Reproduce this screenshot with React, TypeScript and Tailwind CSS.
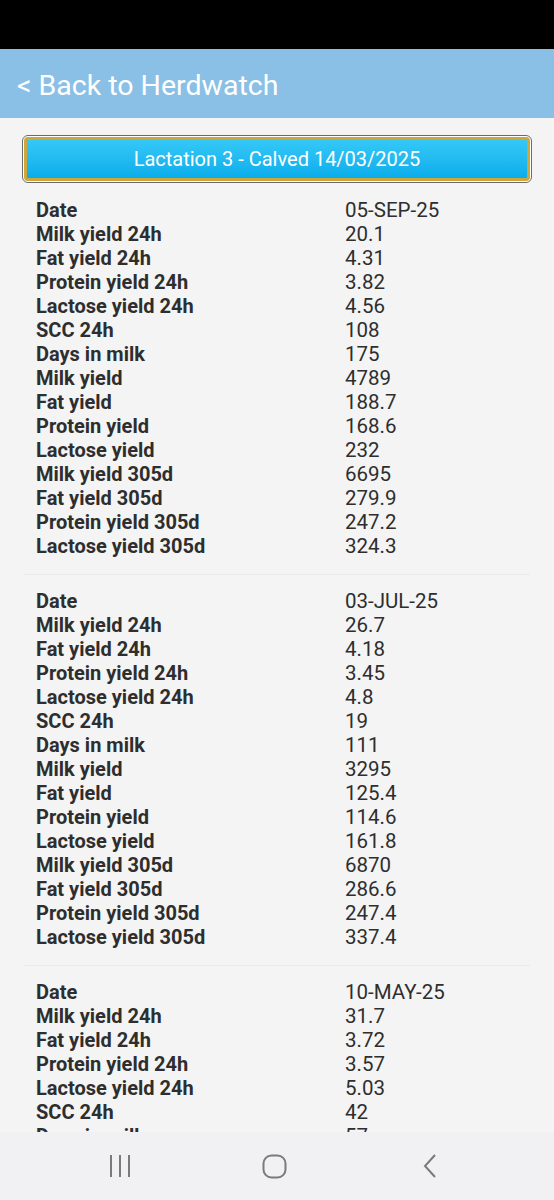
import React from 'react';

type Record = {
  date: string;
  values: string[];
};

const labels = [
  'Milk yield 24h',
  'Fat yield 24h',
  'Protein yield 24h',
  'Lactose yield 24h',
  'SCC 24h',
  'Days in milk',
  'Milk yield',
  'Fat yield',
  'Protein yield',
  'Lactose yield',
  'Milk yield 305d',
  'Fat yield 305d',
  'Protein yield 305d',
  'Lactose yield 305d',
];

const records: Record[] = [
  {
    date: '05-SEP-25',
    values: ['20.1', '4.31', '3.82', '4.56', '108', '175', '4789', '188.7', '168.6', '232', '6695', '279.9', '247.2', '324.3'],
  },
  {
    date: '03-JUL-25',
    values: ['26.7', '4.18', '3.45', '4.8', '19', '111', '3295', '125.4', '114.6', '161.8', '6870', '286.6', '247.4', '337.4'],
  },
  {
    date: '10-MAY-25',
    values: ['31.7', '3.72', '3.57', '5.03', '42', '57', '2100', '88.4', '74.2', '105.6', '7012', '290.3', '251.8', '340.1'],
  },
];

const Row: React.FC<{ label: string; value: string }> = ({ label, value }) => (
  <div className="flex h-[24px] items-center leading-[24px] text-[#2e2e2e]">
    <div className="w-[309px] text-[20px] font-bold">{label}</div>
    <div className="text-[20.5px]">{value}</div>
  </div>
);

const RecordBlock: React.FC<{ rec: Record; last: boolean }> = ({ rec, last }) => (
  <div className={last ? 'pt-[14px]' : 'border-b border-[#ebebeb] pb-[16px] pt-[14px]'}>
    <div className="pl-[12px]">
      <Row label="Date" value={rec.date} />
      {labels.map((l, i) => (
        <Row key={l} label={l} value={rec.values[i]} />
      ))}
    </div>
  </div>
);

export default function App() {
  return (
    <div
      className="flex h-[1200px] w-[554px] flex-col overflow-hidden bg-[#f4f4f4]"
      style={{ fontFamily: 'Roboto, "Noto Sans", sans-serif' }}
    >
      {/* status bar */}
      <div className="h-[49px] shrink-0 bg-black" />

      {/* header */}
      <div className="flex h-[69px] shrink-0 items-center bg-[#8bc0e6] pl-[17px] pt-[5px]">
        <span className="text-[28.5px] leading-none text-white">&lt; Back to Herdwatch</span>
      </div>

      {/* content */}
      <div className="flex-1 overflow-hidden px-[24px]">
        <div className="pt-[17px]">
          <div className="-mx-[2px] rounded-[6px] border border-[#6b6b6b] bg-white p-[1px]">
            <div className="flex h-[44px] items-center justify-center rounded-[4px] border-[3px] border-[#cda63c] bg-gradient-to-b from-[#33c8f7] to-[#07adeb]">
              <span className="text-[20px] text-white">Lactation 3 - Calved 14/03/2025</span>
            </div>
          </div>
        </div>
        <div className="pt-[1px]">
          {records.map((r, i) => (
            <RecordBlock key={r.date} rec={r} last={i === records.length - 1} />
          ))}
        </div>
      </div>

      {/* android nav bar */}
      <div className="flex h-[68px] shrink-0 items-center bg-[#f1f1f3] pl-[42px]">
        <div className="flex w-[155px] justify-center">
          <svg width="24" height="24" viewBox="0 0 24 24">
            <path d="M3 1v22M12 1v22M21 1v22" stroke="#7a7a7a" strokeWidth="2" />
          </svg>
        </div>
        <div className="flex w-[155px] justify-center">
          <svg width="25" height="25" viewBox="0 0 25 25">
            <rect x="1.5" y="1.5" width="22" height="22" rx="8" fill="none" stroke="#7a7a7a" strokeWidth="2" />
          </svg>
        </div>
        <div className="flex w-[155px] justify-center">
          <svg width="16" height="26" viewBox="0 0 16 26">
            <path d="M13 2L3 13l10 11" fill="none" stroke="#7a7a7a" strokeWidth="2" />
          </svg>
        </div>
      </div>
    </div>
  );
}
